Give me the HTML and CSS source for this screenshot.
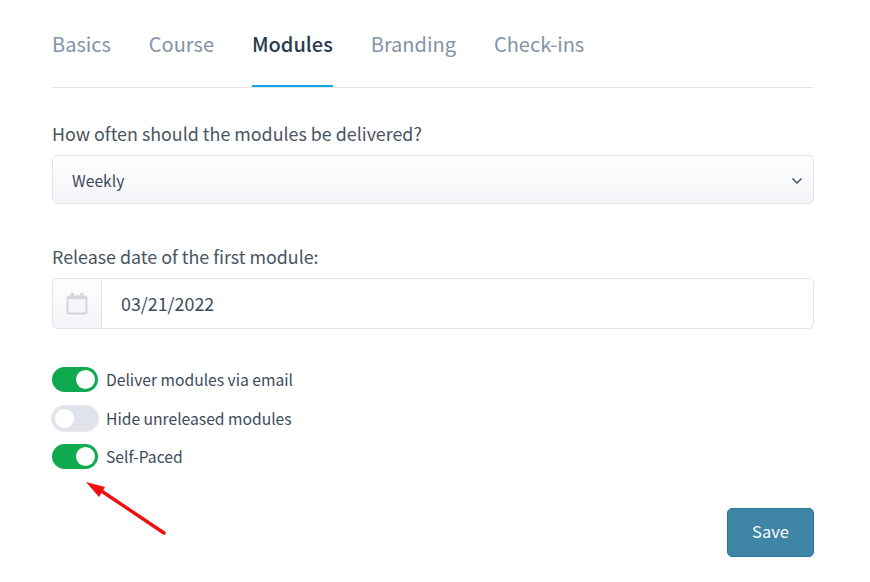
FILE: index.html
```html
<!DOCTYPE html>
<html lang="en">
<head>
    <meta charset="UTF-8">
    <meta name="viewport" content="width=device-width, initial-scale=1.0">
    <title>Modules</title>
    <link rel="stylesheet" href="styles.css">
</head>
<body>
    <div class="page">
        <div class="tabs">
            <a class="tab">Basics</a>
            <a class="tab">Course</a>
            <a class="tab active">Modules</a>
            <a class="tab">Branding</a>
            <a class="tab">Check-ins</a>
        </div>

        <div class="field field-delivery">
            <div class="label">How often should the modules be delivered?</div>
            <div class="select">
                <span>Weekly</span>
                <svg class="chevron" width="12" height="8" viewBox="0 0 12 8"><path d="M1.5 1.5 6 6l4.5-4.5" fill="none" stroke="#3d4a5c" stroke-width="1.4"/></svg>
            </div>
        </div>

        <div class="field field-date">
            <div class="label">Release date of the first module:</div>
            <div class="date-input">
                <div class="date-addon">
                    <svg width="22" height="23" viewBox="0 0 22 23">
                        <path d="M0.5 6a2.500 2.500 0 0 1 2.500-2.500h16a2.500 2.500 0 0 1 2.500 2.500v14.500a2 2 0 0 1-2 2H2.500a2 2 0 0 1-2-2z" fill="#d3d6dc"/>
                        <rect x="2.500" y="7" width="17" height="13.500" rx="0.500" fill="#f3f5f9"/>
                        <rect x="4.500" y="0.500" width="3.500" height="5.500" rx="1.700" fill="#d3d6dc"/>
                        <rect x="14" y="0.500" width="3.500" height="5.500" rx="1.700" fill="#d3d6dc"/>
                    </svg>
                </div>
                <div class="date-value">03/21/2022</div>
            </div>
        </div>

        <div class="toggles">
            <div class="toggle-row">
                <span class="toggle on"></span>
                <span class="toggle-label">Deliver modules via email</span>
            </div>
            <div class="toggle-row">
                <span class="toggle"></span>
                <span class="toggle-label">Hide unreleased modules</span>
            </div>
            <div class="toggle-row">
                <span class="toggle on"></span>
                <span class="toggle-label">Self-Paced</span>
            </div>
        </div>

        <div class="actions">
            <button class="save">Save</button>
        </div>
    </div>

    <svg class="arrow" width="90" height="60" viewBox="0 0 90 60">
        <path d="M79 52 15 9" stroke="#f00f0f" stroke-width="3.4" stroke-linecap="round" fill="none"/>
        <path d="M1 1 20 6 14 16z" fill="#f00f0f"/>
    </svg>
</body>
</html>
```

FILE: styles.css
```css
body {
    margin: 0;
    font-family: "Noto Sans CJK SC", "Noto Sans", sans-serif;
    color: #3d4a5c;
    background-color: #fff;
}

.page {
    width: 762px;
    margin-left: 52px;
}

.tabs {
    display: flex;
    gap: 38px;
    height: 88px;
    box-sizing: border-box;
    padding-top: 26px;
    border-bottom: 1px solid #e2e5ea;
}

.tab {
    height: 61px;
    box-sizing: border-box;
    font-size: 20px;
    line-height: 36px;
    color: #8493a5;
}

.tab.active {
    font-weight: 500;
    color: #2a3a4c;
    border-bottom: 2px solid #0ea5e9;
}

.field-delivery {
    margin-top: 31px;
}

.field-date {
    margin-top: 38px;
}

.label {
    font-size: 17.85px;
    line-height: 28px;
    margin-bottom: 8px;
    color: #4a5462;
}

.select {
    display: flex;
    align-items: center;
    justify-content: space-between;
    height: 49px;
    box-sizing: border-box;
    padding: 2px 10px 0 19px;
    font-size: 15.65px;
    border: 1px solid #e2e5ea;
    border-radius: 5px;
    background: linear-gradient(#fff, #f3f4f7);
}

.date-input {
    display: flex;
    height: 51px;
    box-sizing: border-box;
    border: 1px solid #e2e5ea;
    border-radius: 5px;
}

.date-addon {
    display: flex;
    align-items: center;
    justify-content: center;
    width: 48px;
    border-right: 1px solid #e2e5ea;
    border-radius: 5px 0 0 5px;
    background: linear-gradient(#fff, #f3f4f7);
}

.date-value {
    padding-left: 19px;
    font-size: 17.85px;
    line-height: 49px;
}

.toggles {
    margin-top: 31.5px;
}

.toggle-row {
    display: flex;
    align-items: center;
    gap: 8px;
    height: 38.5px;
}

.toggle {
    position: relative;
    width: 46px;
    height: 25px;
    box-sizing: border-box;
    border-radius: 13px;
    background-color: #e0e3e9;
    box-shadow: 0 0 0 1px #e8eaef;
}

.toggle::after {
    content: "";
    position: absolute;
    top: 3px;
    left: 3px;
    width: 19px;
    height: 19px;
    border-radius: 50%;
    background-color: #fff;
}

.toggle.on {
    background-color: #0fa94f;
    box-shadow: none;
}

.toggle.on::after {
    left: 24px;
}

.toggle-label {
    font-size: 15.65px;
}

.actions {
    display: flex;
    justify-content: flex-end;
    margin-top: 31.5px;
}

.save {
    width: 87px;
    height: 49px;
    padding-bottom: 3px;
    font-family: inherit;
    font-size: 16.5px;
    color: #fff;
    background-color: #3f86a6;
    border: 1px solid #1f7a9c;
    border-radius: 5px;
}

/* annotation drawn on top of the screenshot */
.arrow {
    position: absolute;
    left: 85px;
    top: 481px;
}
```
